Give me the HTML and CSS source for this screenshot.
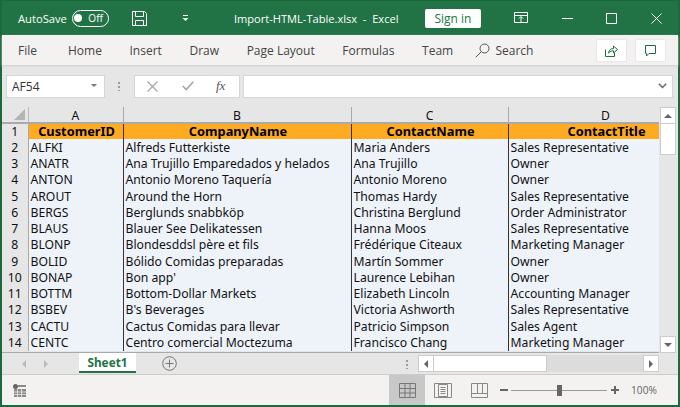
FILE: index.html
```html
<!DOCTYPE html>
<html lang="en">
<head>
    <meta charset="UTF-8">
    <title>Import-HTML-Table.xlsx - Excel</title>
    <link rel="stylesheet" href="styles.css">
</head>
<body>
<div class="window">
    <!-- title bar -->
    <div class="titlebar">
        <span class="autosave">AutoSave</span>
        <span class="toggle"><i></i>Off</span>
        <svg class="save" width="17" height="17" viewBox="0 0 17 17" fill="none" stroke="#fff" stroke-width="1">
            <path d="M1.5 1.5H13.5L15.5 3.5V15.5H1.5Z"/>
            <path d="M4.5 1.5V6.5H12.5V1.5"/>
            <path d="M4.5 15.5V10.5H12.5V15.5"/>
        </svg>
        <svg class="qat" width="7" height="7" viewBox="0 0 7 7" fill="#fff">
            <path d="M1 0H6V1H1Z"/>
            <path d="M0.5 3H6.5L3.5 6Z"/>
        </svg>
        <span class="doc">Import-HTML-Table.xlsx&nbsp; -&nbsp; Excel</span>
        <button class="signin">Sign in</button>
        <svg class="ctl first" width="14" height="12" viewBox="0 0 14 12" fill="none" stroke="#fff">
            <path d="M0.5 0.5H13.5V10.5H0.5Z"/>
            <path d="M0.5 3.5H13.5M7 10.5V5M5 6.5L7 4.5L9 6.5"/>
        </svg>
        <svg class="ctl min" width="11" height="1" viewBox="0 0 11 1"><path d="M0 0H11V1H0Z" fill="#fff"/></svg>
        <svg class="ctl max" width="11" height="11" viewBox="0 0 11 11" fill="none" stroke="#fff"><path d="M0.5 0.5H10.5V10.5H0.5Z"/></svg>
        <svg class="ctl close" width="11" height="11" viewBox="0 0 11 11" fill="none" stroke="#fff"><path d="M0.5 0.5L10.5 10.5M10.5 0.5L0.5 10.5"/></svg>
    </div>

    <!-- ribbon tabs -->
    <div class="ribbon">
        <span class="tab-file">File</span>
        <span>Home</span>
        <span>Insert</span>
        <span>Draw</span>
        <span>Page Layout</span>
        <span>Formulas</span>
        <span>Team</span>
        <svg class="lens" width="15" height="15" viewBox="0 0 15 15" fill="none" stroke="#555">
            <circle cx="9.5" cy="5.5" r="4.5"/>
            <path d="M6.3 8.7L0.8 14.2"/>
        </svg>
        <span class="search">Search</span>
        <span class="rb-btn share">
            <svg width="13" height="13" viewBox="0 0 13 13" fill="none" stroke="#1f6e43">
                <path d="M0.5 5.5V12.5H9.5V9"/>
                <path d="M3.5 9C4 6 6 4.5 8.5 4.5V2L12.5 5.5L8.5 9V6.8C6.5 6.8 5 7.5 3.5 9Z"/>
            </svg>
        </span>
        <span class="rb-btn">
            <svg width="13" height="13" viewBox="0 0 13 13" fill="none" stroke="#1f6e43">
                <path d="M1.5 1.5H11.5V9.5H5L2.5 12V9.5H1.5Z"/>
            </svg>
        </span>
    </div>

    <!-- formula bar -->
    <div class="formula">
        <div class="namebox">AF54<span class="caret"></span></div>
        <span class="dots"></span>
        <div class="fx-btns">
            <svg width="11" height="11" viewBox="0 0 11 11" fill="none" stroke="#a6a6a6" stroke-width="1.2"><path d="M0.5 0.5L10.5 10.5M10.5 0.5L0.5 10.5"/></svg>
            <svg width="12" height="10" viewBox="0 0 12 10" fill="none" stroke="#a6a6a6" stroke-width="1.6"><path d="M0.7 5L4.3 8.6L11.3 0.8"/></svg>
            <span class="fx">fx</span>
        </div>
        <div class="input">
            <svg width="9" height="6" viewBox="0 0 9 6" fill="none" stroke="#666" stroke-width="1.5"><path d="M0.8 0.8L4.5 4.5L8.2 0.8"/></svg>
        </div>
    </div>

    <!-- sheet -->
    <div class="sheet">
        <div class="grid">
            <table>
                <colgroup>
                    <col class="c-h"><col class="c-a"><col class="c-b"><col class="c-c"><col class="c-d">
                </colgroup>
                <thead>
                    <tr>
                        <th class="corner"><span></span></th><th>A</th><th>B</th><th>C</th><th>D</th>
                    </tr>
                </thead>
                <tbody>
                    <tr class="head"><th>1</th><td>CustomerID</td><td>CompanyName</td><td>ContactName</td><td>ContactTitle</td></tr>
                    <tr><th>2</th><td>ALFKI</td><td>Alfreds Futterkiste</td><td>Maria Anders</td><td>Sales Representative</td></tr>
                    <tr><th>3</th><td>ANATR</td><td>Ana Trujillo Emparedados y helados</td><td>Ana Trujillo</td><td>Owner</td></tr>
                    <tr><th>4</th><td>ANTON</td><td>Antonio Moreno Taquería</td><td>Antonio Moreno</td><td>Owner</td></tr>
                    <tr><th>5</th><td>AROUT</td><td>Around the Horn</td><td>Thomas Hardy</td><td>Sales Representative</td></tr>
                    <tr><th>6</th><td>BERGS</td><td>Berglunds snabbköp</td><td>Christina Berglund</td><td>Order Administrator</td></tr>
                    <tr><th>7</th><td>BLAUS</td><td>Blauer See Delikatessen</td><td>Hanna Moos</td><td>Sales Representative</td></tr>
                    <tr><th>8</th><td>BLONP</td><td>Blondesddsl père et fils</td><td>Frédérique Citeaux</td><td>Marketing Manager</td></tr>
                    <tr><th>9</th><td>BOLID</td><td>Bólido Comidas preparadas</td><td>Martín Sommer</td><td>Owner</td></tr>
                    <tr><th>10</th><td>BONAP</td><td>Bon app'</td><td>Laurence Lebihan</td><td>Owner</td></tr>
                    <tr><th>11</th><td>BOTTM</td><td>Bottom-Dollar Markets</td><td>Elizabeth Lincoln</td><td>Accounting Manager</td></tr>
                    <tr><th>12</th><td>BSBEV</td><td>B's Beverages</td><td>Victoria Ashworth</td><td>Sales Representative</td></tr>
                    <tr><th>13</th><td>CACTU</td><td>Cactus Comidas para llevar</td><td>Patricio Simpson</td><td>Sales Agent</td></tr>
                    <tr><th>14</th><td>CENTC</td><td>Centro comercial Moctezuma</td><td>Francisco Chang</td><td>Marketing Manager</td></tr>
                </tbody>
            </table>
        </div>
        <div class="vscroll">
            <span class="sb-btn"><i class="tri up"></i></span>
            <span class="thumb-v"></span>
            <span class="track-v"></span>
            <span class="sb-btn"><i class="tri down"></i></span>
        </div>
    </div>

    <!-- sheet tabs -->
    <div class="tabs">
        <i class="tri left pale nav"></i>
        <i class="tri right pale nav"></i>
        <span class="sheet-tab">Sheet1</span>
        <svg class="add" width="15" height="15" viewBox="0 0 15 15" fill="none" stroke="#777">
            <circle cx="7.5" cy="7.5" r="6.8"/>
            <path d="M7.5 3.5V11.5M3.5 7.5H11.5"/>
        </svg>
        <span class="dots tab-dots"></span>
        <div class="hscroll">
            <span class="sb-btn"><i class="tri left"></i></span>
            <span class="thumb-h"></span>
            <span class="track-h"></span>
            <span class="sb-btn"><i class="tri right"></i></span>
        </div>
    </div>

    <!-- status bar -->
    <div class="status">
        <svg class="macro" width="13" height="13" viewBox="0 0 13 13">
            <circle cx="2.5" cy="2.5" r="2.5" fill="#666"/>
            <path d="M5 1H13V3H5ZM1 5H13V13H1Z" fill="#8a8a8a"/>
            <path d="M1 8H13M1 10.5H13M4.5 5V13M8.5 5V13" stroke="#e8e8e8" stroke-width="0.8"/>
        </svg>
        <span class="view active">
            <svg width="17" height="15" viewBox="0 0 17 15" fill="none" stroke="#777"><path d="M0.5 0.5H16.5V14.5H0.5ZM0.5 5.5H16.5M0.5 10H16.5M6 0.5V14.5M11 0.5V14.5"/></svg>
        </span>
        <span class="view">
            <svg width="18" height="15" viewBox="0 0 18 15" fill="none" stroke="#888"><path d="M0.5 0.5H17.5V14.5H0.5ZM4.5 1.5H13.5V13.5H4.5ZM6.5 4.5H11.5M6.5 6.5H11.5M6.5 8.5H11.5M6.5 10.5H11.5"/></svg>
        </span>
        <span class="view">
            <svg width="17" height="15" viewBox="0 0 17 15" fill="none" stroke="#888"><path d="M0.5 0.5H16.5V14.5H0.5ZM0.5 10.5H16.5M6.5 0.5V10.5M11.5 0.5V10.5"/></svg>
        </span>
        <div class="zoom">
            <span class="zm-sign"></span>
            <div class="slider"><span class="knob"></span></div>
            <span class="zm-sign plus"></span>
            <span class="pct">100%</span>
        </div>
    </div>
</div>
</body>
</html>
```

FILE: styles.css
```css
* {
    padding: 0;
    margin: 0;
    box-sizing: border-box;
}

html, body {
    width: 680px;
    height: 407px;
    overflow: hidden;
}

body {
    font-family: "Open Sans", "Liberation Sans", sans-serif;
    font-size: 12px;
    color: #444;
}

.window {
    width: 680px;
    height: 407px;
    display: flex;
    flex-direction: column;
    border: 2px solid #1a6a3e;
    border-top-width: 1px;
    background: #f3f2f1;
}

/* title bar */
.titlebar {
    height: 34px;
    flex: none;
    display: flex;
    align-items: center;
    background: #217346;
    color: #fff;
    padding-left: 16px;
    font-size: 11.2px;
}

.toggle {
    width: 37px;
    height: 17px;
    margin-left: 5px;
    border: 1px solid #fff;
    border-radius: 9px;
    display: flex;
    align-items: center;
    justify-content: flex-end;
    padding-right: 5px;
    font-size: 10px;
}

.toggle i {
    width: 8px;
    height: 8px;
    background: #fff;
    border-radius: 50%;
    margin-right: 6px;
}

.save {
    margin-left: 22px;
}

.qat {
    margin-left: 34px;
}

.doc {
    margin-left: 45px;
    width: 191px;
    font-size: 11.1px;
    white-space: nowrap;
}

.signin {
    width: 56px;
    height: 19px;
    margin-left: 0;
    border: 0;
    border-radius: 2px;
    background: #fff;
    color: #217346;
    font: 12px "Open Sans", sans-serif;
}

.ctl.first {
    margin-left: 33px;
}

.ctl.min {
    margin-left: 34px;
}

.ctl.max {
    margin-left: 33px;
}

.ctl.close {
    margin-left: 34px;
}

/* ribbon */
.ribbon {
    height: 30px;
    flex: none;
    display: flex;
    align-items: center;
    padding-left: 16px;
    background: #f3f2f1;
    box-shadow: 0 1px 2px #ccc;
    position: relative;
    font-size: 12px;
    gap: 27.6px;
}

.ribbon .tab-file {
    margin-right: 3.4px;
}

.ribbon .lens {
    margin-left: -6px;
}

.ribbon .search {
    margin-left: -22px;
}

.rb-btn {
    width: 31px;
    height: 23px;
    background: #fff;
    border: 1px solid #e8e8e8;
    border-radius: 2px;
    display: flex;
    align-items: center;
    justify-content: center;
}

.rb-btn.share {
    margin-left: auto;
}

.ribbon .rb-btn:last-child {
    margin-left: -19.6px;
    margin-right: 12px;
}

/* formula bar */
.formula {
    height: 42px;
    flex: none;
    display: flex;
    align-items: center;
    background: #e6e6e6;
    padding: 0 5px 0 4px;
}

.namebox {
    width: 99px;
    height: 23px;
    background: #fff;
    border: 1px solid #d6d6d6;
    display: flex;
    align-items: center;
    padding-left: 5px;
    font-size: 12px;
    color: #333;
    position: relative;
}

.caret {
    position: absolute;
    right: 7px;
    top: 8px;
    border: 3px solid transparent;
    border-top-color: #777;
}

.dots {
    width: 2px;
    height: 10px;
    margin: 0 14px 0 13px;
    background: radial-gradient(circle, #999 1px, transparent 1px) 0 0 / 2px 4px;
}

.fx-btns {
    width: 106px;
    height: 23px;
    background: #fff;
    border: 1px solid #d6d6d6;
    display: flex;
    align-items: center;
    padding-left: 12px;
    gap: 24px;
}

.fx {
    font: italic 13px "Liberation Serif", serif;
    color: #555;
    margin-left: -2px;
}

.input {
    flex: 1;
    height: 23px;
    margin-left: 3px;
    background: #fff;
    border: 1px solid #d6d6d6;
    display: flex;
    align-items: center;
    justify-content: flex-end;
    padding-right: 5px;
}

/* sheet */
.sheet {
    height: 246px;
    flex: none;
    display: flex;
    background: #e6e6e6;
}

.grid {
    flex: 1;
    overflow: hidden;
    border-bottom: 1px solid #aaa;
}

table {
    width: 701px;
    table-layout: fixed;
    border-collapse: collapse;
    font-family: "Noto Sans", sans-serif;
    font-size: 12.2px;
    color: #111;
}

.c-h { width: 26px; }
.c-a { width: 95px; }
.c-b { width: 228px; }
.c-c { width: 157px; }
.c-d { width: 195px; }

thead th {
    height: 16px;
    font-weight: 400;
    background: #e6e6e6;
    border-right: 1px solid #aaa;
    border-bottom: 2px solid #aaa;
    padding-top: 1px;
    line-height: 13px;
    text-align: center;
}

thead th.corner {
    border-right: 1px solid #bbb;
    position: relative;
}

.corner span {
    position: absolute;
    right: 3px;
    bottom: 2px;
    border-style: solid;
    border-width: 0 0 11px 11px;
    border-color: transparent transparent #b5b5b5 transparent;
}

tbody tr {
    height: 16.25px;
}

tbody th {
    font-weight: 400;
    background: #e6e6e6;
    text-align: center;
    border-right: 1px solid #aaa;
    padding: 0;
    line-height: 15px;
}

td {
    background: #eef3fa;
    border-right: 1px solid #333;
    padding: 0 0 0 2px;
    line-height: 15px;
    white-space: nowrap;
    overflow: hidden;
}

tr.head td {
    background: #ffab21;
    font-size: 12.8px;
    font-weight: 700;
    text-align: center;
    color: #000;
}

.vscroll {
    width: 16px;
    flex: none;
    margin: 0 2px 0 1px;
    display: flex;
    flex-direction: column;
    background: #e6e6e6;
}

.sb-btn {
    height: 17px;
    flex: none;
    width: 16px;
    background: #fff;
    border: 1px solid #ccc;
    display: flex;
    align-items: center;
    justify-content: center;
}

.thumb-v {
    height: 31px;
    width: 16px;
    flex: none;
    background: #fff;
    border: 1px solid #ccc;
    border-top: 0;
}

.track-v {
    flex: 1;
}

.tri {
    display: block;
    width: 0;
    height: 0;
    border: 3px solid transparent;
}

.tri.up {
    border-bottom: 4px solid #666;
    border-top: 0;
    border-left-width: 4px;
    border-right-width: 4px;
}

.tri.down {
    border-top: 4px solid #666;
    border-bottom: 0;
    border-left-width: 4px;
    border-right-width: 4px;
}

.tri.left {
    border-right: 4px solid #666;
    border-left: 0;
    border-top-width: 4px;
    border-bottom-width: 4px;
}

.tri.right {
    border-left: 4px solid #666;
    border-right: 0;
    border-top-width: 4px;
    border-bottom-width: 4px;
}

.tri.pale.left {
    border-right-color: #bbb;
}

.tri.pale.right {
    border-left-color: #bbb;
}

/* sheet tabs */
.tabs {
    height: 22px;
    flex: none;
    display: flex;
    align-items: center;
    background: #e6e6e6;
    border-bottom: 1px solid #ccc;
    padding-left: 20px;
}

.nav + .nav {
    margin-left: 18px;
}

.sheet-tab {
    width: 57px;
    height: 20px;
    margin: -2px 0 0 31px;
    background: #fff;
    border-bottom: 2px solid #217346;
    color: #217346;
    font: 700 11.8px/18px "Noto Sans", sans-serif;
    text-align: center;
}

.add {
    margin-left: 26px;
}

.tab-dots {
    margin: 0 10px 0 auto;
}

.hscroll {
    width: 241px;
    height: 17px;
    display: flex;
    margin-right: 19px;
}

.hscroll .sb-btn {
    height: 17px;
}

.thumb-h {
    width: 113px;
    height: 17px;
    background: #fff;
    border: 1px solid #ccc;
    border-left: 0;
}

.track-h {
    flex: 1;
    background: #dcdcdc;
}

/* status bar */
.status {
    flex: 1;
    display: flex;
    align-items: center;
    background: #f3f2f1;
    padding-left: 11px;
}

.macro {
    margin-right: 363px;
}

.view {
    width: 36px;
    height: 30px;
    display: flex;
    align-items: center;
    justify-content: center;
}

.view.active {
    background: #c8c8c8;
}

.zoom {
    display: flex;
    align-items: center;
    margin-left: 3px;
}

.zm-sign {
    width: 8px;
    height: 2px;
    background: #666;
    position: relative;
}

.zm-sign.plus::after {
    content: "";
    position: absolute;
    left: 3px;
    top: -3px;
    width: 2px;
    height: 8px;
    background: #666;
}

.slider {
    width: 96px;
    height: 1px;
    margin: 0 4px 0 3px;
    background: #999;
    position: relative;
}

.knob {
    position: absolute;
    left: 46px;
    top: -5px;
    width: 5px;
    height: 11px;
    background: #666;
}

.pct {
    margin-left: 12px;
    font-size: 10.2px;
    color: #666;
}
```
